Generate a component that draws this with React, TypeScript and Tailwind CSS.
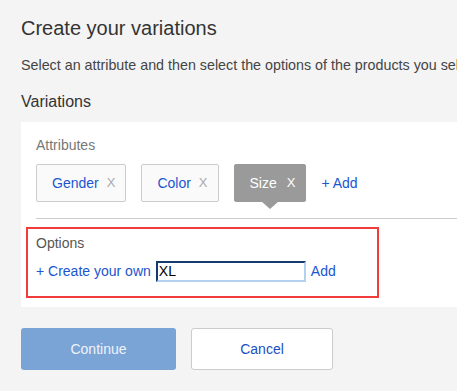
export default function App() {
  return (
    <div className="h-[391px] w-[457px] overflow-hidden bg-[#f4f4f4] font-['Liberation_Sans',Arial,sans-serif]">
      <div className="pl-[21px] pt-[16px]">
        <h1 className="text-[20px] leading-[24px] text-[#333]">Create your variations</h1>
        <p className="mt-[15px] whitespace-nowrap text-[14.3px] leading-[20px] text-[#444]">
          Select an attribute and then select the options of the products you sell.
        </p>
        <h2 className="mt-[17px] text-[16px] leading-[20px] text-[#333]">Variations</h2>

        <div className="mt-[10px] w-[520px] bg-white pb-[9px] pl-[15px] pt-[13px]">
          <div className="text-[14px] leading-[20px] text-[#777]">Attributes</div>

          <div className="mt-[9px] flex items-center gap-[15px]">
            <div className="flex h-[38px] items-center rounded-[2px] border border-[#ccc] bg-[#fafafa] pl-[15px] pr-[10px]">
              <span className="text-[14px] text-[#1a56d0]">Gender</span>
              <span className="ml-[8px] text-[13px] text-[#aaa]">X</span>
            </div>
            <div className="flex h-[38px] items-center rounded-[2px] border border-[#ccc] bg-[#fafafa] pl-[15px] pr-[10px]">
              <span className="text-[14px] text-[#1a56d0]">Color</span>
              <span className="ml-[8px] text-[13px] text-[#aaa]">X</span>
            </div>
            <div className="relative flex h-[38px] items-center rounded-[2px] border border-[#9a9a9a] bg-[#9a9a9a] pl-[15px] pr-[10px]">
              <span className="text-[14px] text-white">Size</span>
              <span className="ml-[10px] text-[13px] text-white">X</span>
              <span className="absolute left-1/2 top-full -translate-x-1/2 border-x-[9px] border-t-[8px] border-x-transparent border-t-[#9a9a9a]" />
            </div>
            <a className="text-[14px] text-[#1a56d0]">+ Add</a>
          </div>

          <div className="mt-[16px] h-px bg-[#ccc]" />

          <div className="-ml-[10px] mt-[8px] w-[353px] border-2 border-[#f23b3b] pb-[14px] pl-[8px] pt-[4px]">
            <div className="text-[14px] leading-[20px] text-[#555]">Options</div>
            <div className="mt-[8px] flex items-center">
              <a className="text-[14px] text-[#1a56d0]">+ Create your own</a>
              <input
                type="text"
                defaultValue="XL"
                className="ml-[5px] h-[21px] w-[150px] border-2 border-b-[#b3d0ee] border-l-[#123c70] border-r-[#b3d0ee] border-t-[#123c70] bg-white px-px text-[14px] text-black outline-none"
              />
              <a className="ml-[5px] text-[14px] text-[#1a56d0]">Add</a>
            </div>
          </div>
        </div>

        <div className="mt-[21px] flex gap-[15px]">
          <button className="h-[42px] w-[155px] rounded-[3px] bg-[#7ba4d6] text-[14px] text-[#eef3fa]">
            Continue
          </button>
          <button className="h-[42px] w-[142px] rounded-[3px] border border-[#ccc] bg-white text-[14px] text-[#1a4fc0]">
            Cancel
          </button>
        </div>
      </div>
    </div>
  );
}
